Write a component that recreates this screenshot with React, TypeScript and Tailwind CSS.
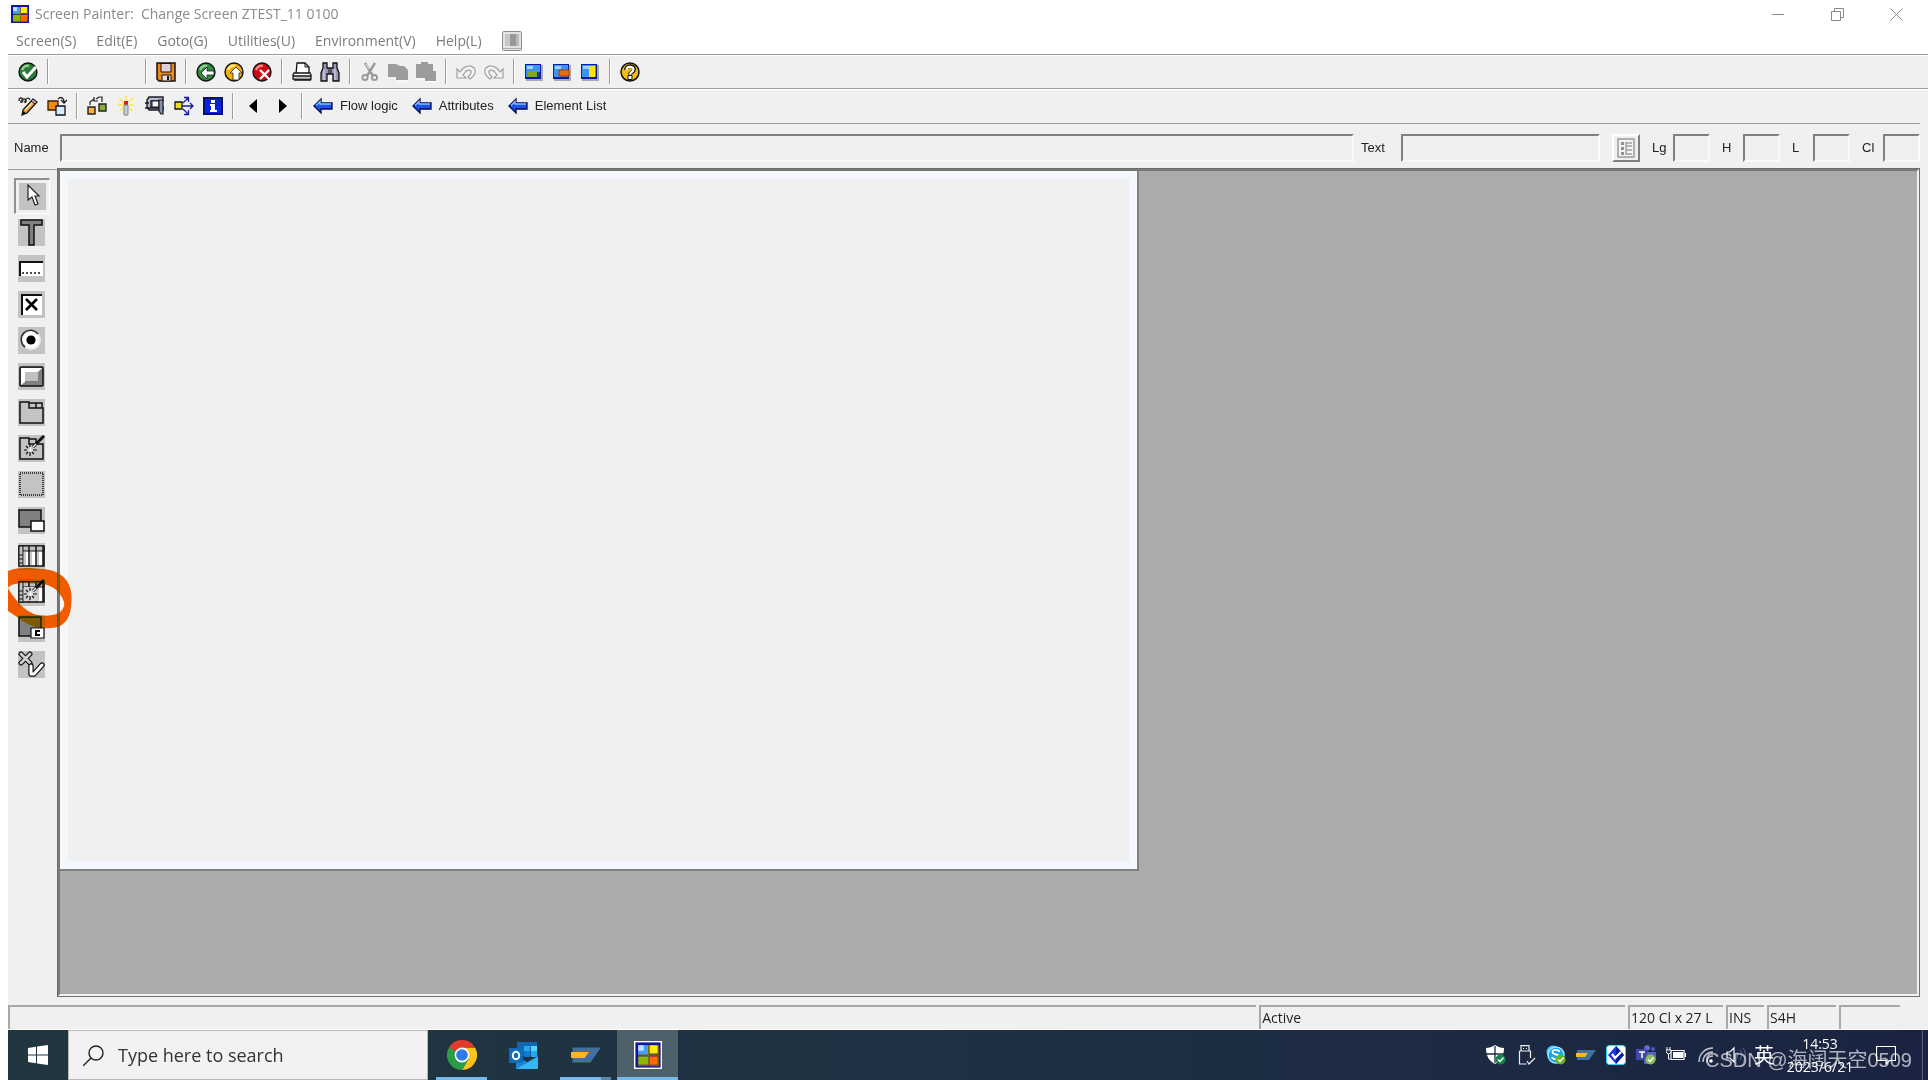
import type { ReactNode } from "react";

const uiFont = "font-['Open_Sans','Noto_Sans',sans-serif]";
const sapFont = "font-['Liberation_Sans',Arial,sans-serif]";

const Svg = ({ children, size = 20 }: { children: ReactNode; size?: number }) => (
  <svg width={size} height={size} viewBox="0 0 20 20" fill="none" aria-hidden="true" className="block shrink-0">
    {children}
  </svg>
);

const AppLogo = ({ size = 20 }: { size?: number }) => (
  <Svg size={size}>
    <path d="M0 0h20v20H0z" fill="#fff" />
    <path d="M1 1h18v18H1z" fill="#1414a0" />
    <path d="M3 3h7v7H3z" fill="#4aa0f8" />
    <path d="M3 3h4v4H3z" fill="#b9e0ff" />
    <path d="M11 3h6v6h-6z" fill="#fff000" />
    <path d="M3 11h7v6H3z" fill="#8cb800" />
    <path d="M11 11h6v6h-6z" fill="#ff6a00" />
    <path d="M17.500 3v14.500H3" stroke="#7a5c10" />
    <path d="M10.500 3v14M3 10h14" stroke="#7a6a20" />
  </Svg>
);

const SapLogo = ({ size = 20 }: { size?: number }) => (
  <Svg size={size}>
    <path d="M1 5h19l-7 10H1z" fill="#41729f" />
    <path d="M0 8h12l-3 4H0z" fill="#fdb525" />
  </Svg>
);

const Ball = ({ color, light, children }: { color: string; light: string; children: ReactNode }) => (
  <Svg>
    <circle cx="10" cy="10" r="9" fill={color} stroke="#111" strokeWidth="1.4" />
    <path d="M4 8c1-3 4-5 7-4" stroke={light} strokeWidth="2.4" />
    {children}
  </Svg>
);

const SaveIcon = () => (
  <Svg>
    <path d="M1 1h18v18H3l-2-2z" fill="#e88a1c" stroke="#1a1208" strokeWidth="1.5" />
    <path d="M5 1.5h10V10H5z" fill="#ddd0dd" stroke="#1a1208" />
    <path d="M6 13h9v6H6z" fill="#e8dce8" stroke="#1a1208" />
    <path d="M12 14v4" stroke="#1a1208" strokeWidth="2" />
  </Svg>
);

const PrintIcon = () => (
  <Svg>
    <path d="M5 1h8l4 4v7H4z" fill="#fff" stroke="#111" strokeWidth="1.3" />
    <path d="M13 1v4h4" stroke="#111" />
    <path d="M2 11h16l1 2v4H1v-4z" fill="#fff" stroke="#111" strokeWidth="1.3" />
    <path d="M1 14h18M2 18h17" stroke="#111" strokeWidth="1.500" />
    <path d="M2 16h16" stroke="#b0b0b0" strokeWidth="1.500" />
  </Svg>
);

const FindIcon = () => (
  <Svg>
    <path d="M3 1h4v5h6V1h4v5l2 5v8h-6v-7H7v7H1v-8l2-5z" fill="#9999b3" stroke="#111" strokeWidth="1.3" />
    <path d="M4 7v11M15 7v11" stroke="#dcdcf0" />
    <path d="M8 7h4v4H8z" fill="#55556e" />
  </Svg>
);

const CutIcon = () => (
  <Svg>
    <path d="M5 1l8 13M15 1L7 14" stroke="#9a9a9a" strokeWidth="2.4" />
    <circle cx="5" cy="15.500" r="2.600" stroke="#9a9a9a" strokeWidth="2" />
    <circle cx="14.500" cy="15.500" r="2.600" stroke="#9a9a9a" strokeWidth="2" />
    <path d="M6 2l3 5" stroke="#fff" strokeWidth=".8" />
  </Svg>
);

const CopyIcon = () => (
  <Svg>
    <path d="M0 2h8l4 2h4l4 4v10H8v-3H0z" fill="#9c9c9c" />
    <path d="M1 16.500h7M9 19h11" stroke="#fff" />
  </Svg>
);

const PasteIcon = () => (
  <Svg>
    <path d="M0 2h5V0h7v2h5v7h3v10H9v-3H0z" fill="#9c9c9c" />
    <path d="M0 17h9M10 19.500h9" stroke="#fff" />
  </Svg>
);

const UndoIcon = ({ flip = false }: { flip?: boolean }) => (
  <Svg>
    <g transform={flip ? "matrix(-1 0 0 1 20 0)" : undefined}>
      <path
        d="M1 7v9h9l-3-3c3-5 6-6 8-4 1 2-1 4-3 6l2 2c4-3 7-7 4-11-4-4-10-2-14 4z"
        fill="#f4f4f4"
        stroke="#a0a0a0"
        strokeWidth="1.2"
      />
    </g>
  </Svg>
);

const WindowIcon = ({ children }: { children: ReactNode }) => (
  <Svg>
    <path d="M2 3h17v16H2z" fill="#aaa" />
    <path d="M1 2h16v15H1z" fill="#0b1ea0" />
    <path d="M2 3h14v12H2z" fill="#3d94f6" />
    <path d="M3 4h6v3H3z" fill="#9fd0ff" />
    {children}
  </Svg>
);

const HelpIcon = () => (
  <Svg>
    <circle cx="10" cy="10" r="9" fill="#f5bd10" stroke="#111" strokeWidth="1.5" />
    <path d="M6 8c0-5 8-5 8-.5 0 3-4 2.500-4 5" stroke="#111" strokeWidth="4" />
    <path d="M8 13.500h4v4H8z" fill="#fff" stroke="#111" />
    <path d="M6.500 8c0-4 7-4 7-.5 0 2.500-3.500 2.500-3.500 5" stroke="#fff" strokeWidth="2.200" />
  </Svg>
);

const EditIcon = () => (
  <Svg>
    <path d="M1 5c0-4 4-4 4-1s-3 3-2 1 4-3 5-1-2 4-1 1 4-4 5-1" stroke="#222" strokeWidth="1.2" />
    <path d="M5 14L15 3l4 3L9 17l-5 2z" fill="#f2a23a" stroke="#111" strokeWidth="1.2" />
    <path d="M7 14l9-9" stroke="#fde0a0" strokeWidth="1.5" />
    <path d="M15 3l4 3-2 2-4-3z" fill="#c9a6b5" stroke="#111" />
    <path d="M5 15l3 2-4 2z" fill="#111" />
  </Svg>
);

const OtherObjectIcon = () => (
  <Svg>
    <path d="M1 5h10v9H1z" fill="#f08c10" stroke="#3a1c00" strokeWidth="1.3" />
    <path d="M9 10h9v9H9z" fill="#d8ecfa" stroke="#112" strokeWidth="1.3" />
    <path d="M11 3c3-3 6-1 6 3M14 4l3 3 3-3" stroke="#222" strokeWidth="1.3" />
  </Svg>
);

const CheckObjectIcon = () => (
  <Svg>
    <path d="M1 11h7v7H1z" fill="#ffb02e" stroke="#222" strokeWidth="1.4" />
    <path d="M12 8h7v7h-7z" fill="#8fae3c" stroke="#222" strokeWidth="1.4" />
    <path d="M3 9V6l4-3M9 3l3-2h3v5M7 1v4h4" stroke="#222" strokeWidth="1.2" />
  </Svg>
);

const ActivateIcon = () => (
  <Svg>
    <path d="M10 0v4M3 2l4 4M17 2l-4 4M2 9h5M18 9h-5M4 15l3-3M16 15l-3-3" stroke="#ffe838" strokeWidth="1.5" />
    <path d="M8 5h4v4H8z" fill="#e81414" />
    <path d="M8 9h4v10H8z" fill="#b8d0d4" stroke="#889" />
  </Svg>
);

const TestIcon = () => (
  <Svg>
    <path d="M4 1h14v4H6v6h12v3H4l-2-3V4z" fill="#b4bad0" stroke="#1a1a24" strokeWidth="1.4" />
    <path d="M7 5h7v6H7z" fill="#f4f4f4" stroke="#1a1a24" />
    <path d="M14 4h4v14h-2l-2-3z" fill="#8890a8" stroke="#1a1a24" strokeWidth="1.200" />
    <path d="M0 7h4M0 12h14" stroke="#1a1a24" strokeWidth="1.500" />
  </Svg>
);

const WhereUsedIcon = () => (
  <Svg>
    <path d="M8 10h11M16 7l3 3-3 3M9 7l5-5M10 1.500h4.500V6M9 13l5 5M10 18.500h4.500V14" stroke="#1a1aa0" strokeWidth="1.3" />
    <path d="M1 6h7v7H1z" fill="#e8e020" stroke="#111" strokeWidth="1.3" />
  </Svg>
);

const InfoIcon = () => (
  <Svg>
    <path d="M0 1h20v18H0z" fill="#06106e" />
    <path d="M2 3h16v14H2z" fill="#0a22e0" />
    <path d="M8 4h4v3H8zM7 8h5v6h2v2H7v-2h1v-4H7z" fill="#fff" />
  </Svg>
);

const BlueArrow = () => (
  <Svg>
    <path d="M1 10l7-7v4h11v6H8v4z" fill="#1c50f0" stroke="#04084a" strokeWidth="1.3" />
    <path d="M3 9.500l4-4V8h11" stroke="#7fc0ff" strokeWidth="1.400" />
  </Svg>
);

const Caret = ({ right = false }: { right?: boolean }) => (
  <Svg>
    <path d={right ? "M7 3l8 7-8 7z" : "M14 3l-8 7 8 7z"} fill="#000" />
  </Svg>
);

const Divider = () => <div className="mx-[9px] w-0.5 self-stretch border-l border-[#9c9c9c] bg-white" />;

type Item = { label: string; icon: ReactNode };

const IconButton = ({ label, icon }: Item) => (
  <button type="button" aria-label={label} className="flex shrink-0 items-center">
    {icon}
  </button>
);

const menus = ["Screen(S)", "Edit(E)", "Goto(G)", "Utilities(U)", "Environment(V)", "Help(L)"];

const standardGroups: Item[][] = [
  [{ label: "Save", icon: <SaveIcon /> }],
  [
    { label: "Back", icon: <Ball color="#2f8a3c" light="#8fd090"><path d="M5 11l6-6v4h7v4h-7v4z" fill="#fff" stroke="#123" strokeWidth=".8" /></Ball> },
    { label: "Exit", icon: <Ball color="#f0b000" light="#ffe880"><path d="M12 5l6 6h-3v7H9v-7H6z" fill="#fff" stroke="#321" strokeWidth=".8" /></Ball> },
    { label: "Cancel", icon: <Ball color="#cc0a14" light="#ff8a80"><path d="M8 8l9 9M17 8l-9 9" stroke="#fff" strokeWidth="2.400" /></Ball> },
  ],
  [
    { label: "Print", icon: <PrintIcon /> },
    { label: "Find", icon: <FindIcon /> },
  ],
  [
    { label: "Cut", icon: <CutIcon /> },
    { label: "Copy", icon: <CopyIcon /> },
    { label: "Paste", icon: <PasteIcon /> },
  ],
  [
    { label: "Undo", icon: <UndoIcon /> },
    { label: "Redo", icon: <UndoIcon flip /> },
  ],
  [
    { label: "New session", icon: <WindowIcon><path d="M4 9h9v6H4z" fill="#7fa814" /><path d="M13 10h3v5h-3z" fill="#123c90" /></WindowIcon> },
    { label: "Create shortcut", icon: <WindowIcon><path d="M7 8h10v6H7z" fill="#f06a10" stroke="#a03a00" /></WindowIcon> },
    { label: "Customize layout", icon: <WindowIcon><path d="M9 4h6v11H9z" fill="#ffe600" /></WindowIcon> },
  ],
  [{ label: "Help", icon: <HelpIcon /> }],
];

const objectGroups: Item[][] = [
  [
    { label: "Display or change", icon: <EditIcon /> },
    { label: "Other object", icon: <OtherObjectIcon /> },
  ],
  [
    { label: "Check", icon: <CheckObjectIcon /> },
    { label: "Activate", icon: <ActivateIcon /> },
    { label: "Test", icon: <TestIcon /> },
    { label: "Where used", icon: <WhereUsedIcon /> },
    { label: "Information", icon: <InfoIcon /> },
  ],
  [
    { label: "Previous", icon: <Caret /> },
    { label: "Next", icon: <Caret right /> },
  ],
];

const Wand = () => (
  <>
    <path d="M15 12L26 1" stroke="#111" strokeWidth="3" />
    <path d="M15 12l3-3" stroke="#fff" strokeWidth="1.200" />
    <path d="M12 9v3M12 17v4M6 15h3M15 15h4M8 11l2 2M16 19l-2-2M8 19l2-2" stroke="#111" strokeWidth="1.2" />
    <path d="M10 15h5M12.500 12v5" stroke="#fff" />
  </>
);

const TableShape = () => (
  <>
    <path d="M1 3h25v20H1z" fill="#fff" stroke="#111" strokeWidth="1.5" />
    <path d="M1 3h25v5H1z" fill="#c0c0c0" stroke="#111" />
    <path d="M1 3h4v20H1z" fill="#c0c0c0" stroke="#111" />
    <path d="M11 3v20M18 3v20M25 3v20" stroke="#111" strokeWidth="1.500" />
    <path d="M7 9v13M13 9v13M20 9v13" stroke="#b8b8b8" strokeWidth="1.500" />
    <path d="M1 12h4M1 16h4M1 20h4" stroke="#111" />
  </>
);

const tools: Item[] = [
  {
    label: "Select",
    icon: <path d="M9 2v15l4-3 3 8 3-1-3-8h4z" fill="#fff" stroke="#222" strokeWidth="1.200" />,
  },
  {
    label: "Text field",
    icon: <path d="M3 1h21v5h-8v20h-5V6H3z" fill="#808080" stroke="#111" strokeWidth="1.500" />,
  },
  {
    label: "Input field",
    icon: (
      <>
        <path d="M2 7h23v14H2z" fill="#fff" />
        <path d="M2 21V7h23" stroke="#111" strokeWidth="2" />
        <path d="M4 18h20" stroke="#111" strokeWidth="1.500" strokeDasharray="2 2" />
      </>
    ),
  },
  {
    label: "Checkbox",
    icon: (
      <>
        <path d="M4 4h20v20H4z" fill="#fff" />
        <path d="M4 24V4h20" stroke="#111" strokeWidth="2" />
        <path d="M8 8l11 11M19 8L8 19" stroke="#000" strokeWidth="2.600" />
      </>
    ),
  },
  {
    label: "Radio button",
    icon: (
      <>
        <circle cx="13" cy="13" r="9" fill="#fff" stroke="#eee" strokeWidth="2" />
        <path d="M7 20a9.300 9.300 0 1113-13" stroke="#333" strokeWidth="1.600" />
        <circle cx="13" cy="13" r="4.600" fill="#000" />
      </>
    ),
  },
  {
    label: "Pushbutton",
    icon: (
      <>
        <rect x="2" y="4" width="23" height="19" rx="1" fill="#808080" stroke="#111" strokeWidth="1.500" />
        <path d="M3 5h21l-4 4H7v10l-4 3z" fill="#fff" />
        <path d="M7 9h13v9H7z" fill="#c0c0c0" />
      </>
    ),
  },
  {
    label: "Tabstrip",
    icon: <path d="M2 24V3h9v6h14v15zM11 8V4h7v5M18 8V4h6v5" stroke="#111" strokeWidth="1.500" />,
  },
  {
    label: "Tabstrip wizard",
    icon: (
      <>
        <path d="M2 24V3h9v6h14v15zM11 8V4h7v5" stroke="#111" strokeWidth="1.500" />
        <Wand />
      </>
    ),
  },
  {
    label: "Box",
    icon: <path d="M2 2h23v22H2z" stroke="#111" strokeWidth="1.500" strokeDasharray="1 1" />,
  },
  {
    label: "Subscreen area",
    icon: (
      <>
        <path d="M1 3h22v17H1z" fill="#808080" stroke="#111" strokeWidth="1.500" />
        <path d="M13 14h13v10H13z" fill="#fff" stroke="#111" strokeWidth="1.500" />
      </>
    ),
  },
  { label: "Table control", icon: <TableShape /> },
  {
    label: "Table control wizard",
    icon: (
      <>
        <TableShape />
        <path d="M6 8h13v14H6z" fill="#d0d0d0" />
        <Wand />
      </>
    ),
  },
  {
    label: "Custom control",
    icon: (
      <>
        <path d="M1 2h22v19H1z" fill="#808080" stroke="#111" strokeWidth="1.500" />
        <path d="M13 13h13v10H13z" fill="#fff" stroke="#111" strokeWidth="1.200" />
        <path d="M22 16h-4v4h4" stroke="#000" strokeWidth="2" />
      </>
    ),
  },
  {
    label: "Status icon",
    icon: (
      <>
        <path d="M3 3l9 9M12 3l-9 9" stroke="#111" strokeWidth="5" strokeLinecap="round" />
        <path d="M3 3l9 9M12 3l-9 9" stroke="#d0d0d0" strokeWidth="2.800" strokeLinecap="round" />
        <path d="M13 15v8h3l8-9" stroke="#111" strokeWidth="5.400" strokeLinecap="round" strokeLinejoin="round" />
        <path d="M13 15v8h3l8-9" stroke="#fff" strokeWidth="3" strokeLinecap="round" strokeLinejoin="round" />
      </>
    ),
  },
];

const TitleBar = () => (
  <header className="flex h-[28px] items-center pl-[2px] text-[#8a8a8a]">
    <AppLogo />
    <h1 className="ml-[5px] flex-1 whitespace-pre text-sm">Screen Painter:  Change Screen ZTEST_11 0100</h1>
    <div className="flex items-center gap-[46px] pr-[25px]">
      <button type="button" aria-label="Minimize">
        <svg width="13" height="13" viewBox="0 0 13 13" className="block"><path d="M0 6.500h12" stroke="#888" /></svg>
      </button>
      <button type="button" aria-label="Restore">
        <svg width="13" height="13" viewBox="0 0 13 13" fill="none" className="block"><path d="M.5 3.500h9v9h-9zM3.500 3.500v-3h9v9h-3" stroke="#888" /></svg>
      </button>
      <button type="button" aria-label="Close">
        <svg width="13" height="13" viewBox="0 0 13 13" className="block"><path d="M.5.5l12 12M12.500.5l-12 12" stroke="#888" /></svg>
      </button>
    </div>
  </header>
);

const MenuBar = () => (
  <nav className="flex h-[26px] items-center gap-5 pl-2 text-sm text-[#7c7c7c]">
    {menus.map((menu) => (
      <button key={menu} type="button">{menu}</button>
    ))}
    <button type="button" aria-label="Toggle layout">
      <Svg>
        <rect x=".5" y=".5" width="19" height="19" rx="1" fill="#e2e2e2" stroke="#8c8c8c" />
        <path d="M3 3h5v12H3z" fill="#c8c8c8" />
        <path d="M8 3h6v12H8z" fill="#969696" />
        <path d="M14 3h3v12h-3z" fill="#b8b8b8" />
        <path d="M1 17.500h18" stroke="#aaa" />
      </Svg>
    </button>
  </nav>
);

const barStyle = "flex items-center border-t border-[#9c9c9c] pl-[10px] shadow-[inset_0_1px_0_#fff]";

const StandardToolbar = () => (
  <div className={`${barStyle} h-[34px] py-1`}>
    <IconButton
      label="Enter"
      icon={<Ball color="#2a7a3a" light="#8fd090"><path d="M5 10l4 5 9-10" stroke="#fff" strokeWidth="3" /></Ball>}
    />
    <Divider />
    <input aria-label="Command" className="-mx-[9px] w-24 bg-transparent outline-none" />
    {standardGroups.map((group, i) => (
      <div key={i} className="flex items-center self-stretch">
        <Divider />
        <div className="flex gap-2">
          {group.map((item) => <IconButton key={item.label} {...item} />)}
        </div>
      </div>
    ))}
  </div>
);

const ObjectToolbar = () => (
  <div className={`${barStyle} h-[35px] py-1`}>
    {objectGroups.map((group, i) => (
      <div key={i} className="flex items-center self-stretch">
        <div className="flex gap-[9px]">
          {group.map((item) => <IconButton key={item.label} {...item} />)}
        </div>
        <Divider />
      </div>
    ))}
    <div className={`flex gap-[14px] pl-px text-[13px] text-[#222] ${sapFont}`}>
      {["Flow logic", "Attributes", "Element List"].map((label) => (
        <button key={label} type="button" className="flex items-center gap-[7px]">
          <BlueArrow />
          {label}
        </button>
      ))}
    </div>
  </div>
);

const sunken = "h-[28px] border-2 border-t-[#808080] border-l-[#808080] border-r-[#fafafa] border-b-[#fafafa] bg-[#efefef] outline-none";

const FieldBar = () => (
  <div className={`flex h-[46px] items-center border-t border-[#9c9c9c] pt-[3px] text-[13px] text-[#222] ${sapFont}`}>
    <label htmlFor="name" className="w-[52px] pl-[6px]">Name</label>
    <input id="name" className={`${sunken} min-w-0 flex-1`} />
    <label htmlFor="text" className="w-[47px] pl-[7px]">Text</label>
    <input id="text" className={`${sunken} w-[199px]`} />
    <button
      type="button"
      aria-label="Field list"
      className="ml-3 flex size-7 items-center justify-center border-2 border-t-white border-r-[#808080] border-b-[#808080] border-l-white"
    >
      <Svg>
        <path d="M2 1h16v18H2z" fill="#f4f4f4" stroke="#9a9a9a" strokeWidth="1.500" />
        <path d="M5 4h3v3H5zM5 9h3v3H5zM5 14h3v3H5z" fill="#909090" />
        <path d="M10 5h6M10 8h6M10 12h6M10 16h6M10 4v13" stroke="#a0a0a0" strokeWidth="1.500" />
      </Svg>
    </button>
    {["Lg", "H", "L", "Cl"].map((label) => (
      <div key={label} className="ml-3 flex items-center">
        <label htmlFor={label} className="w-[21px]">{label}</label>
        <input id={label} className={`${sunken} w-[37px]`} />
      </div>
    ))}
  </div>
);

const ToolPalette = () => (
  <div className="relative w-[49px] shrink-0 border-t border-[#9c9c9c] pt-3">
    <div className="flex flex-col items-start gap-[9px] pl-[10px]">
      {tools.map(({ label, icon }, i) => (
        <button
          key={label}
          type="button"
          aria-label={label}
          className={i === 0 ? "-m-1 border-t-2 border-r border-b border-l-2 border-t-[#909090] border-r-white border-b-white border-l-[#909090] p-[3px]" : ""}
        >
          <svg width="27" height="27" viewBox="0 0 27 27" fill="none" className="block bg-[#c3c3c3]">{icon}</svg>
        </button>
      ))}
    </div>
    {/* marker ring around the table control wizard */}
    <svg
      width="64"
      height="62"
      viewBox="0 0 64 62"
      className="pointer-events-none absolute top-[398px] left-0 z-10 mix-blend-darken"
    >
      <path
        d="M0 3C10-1 22 0 32 1c14 0 22 5 27 12 5 8 5 16 4 26-1 12-8 21-20 21-12 1-22-2-31-9L0 43zM0 20l1 2c8 12 15 20 25 24 9 3 18 2 25-1 4-3 6-7 5-11C52 23 44 17 34 16c-10 0-19-2-27 0-4 1-6 2-7 4z"
        fill="#f55a00"
        fillRule="evenodd"
      />
    </svg>
  </div>
);

const Workspace = () => (
  <main className="flex min-h-[420px] flex-1">
    <ToolPalette />
    <div className="-mt-px flex flex-1 border border-[#6e6e6e]">
      <div className="grid flex-1 grid-cols-[581fr_419fr] grid-rows-[85fr_15fr] border-2 border-t-[#787878] border-r-[#f2f2f2] border-b-[#f2f2f2] border-l-[#787878] bg-[#ababab]">
        <section
          aria-label="Screen layout"
          className="border-r-2 border-b-2 border-[#808080] bg-[#f4f7fc] p-2"
        >
          <div className="h-full bg-[#f0f0f0]" />
        </section>
      </div>
    </div>
  </main>
);

const cell = "h-[24px] border-t-2 border-l-2 border-[#a8a8a8] pl-px leading-[21px]";

const StatusBar = () => (
  <footer className="mt-2 flex h-[25px] gap-[3px] border-b border-white pr-7 text-sm text-[#222]">
    <div className={`${cell} flex-[1249]`} />
    <div className={`${cell} flex-[364]`}>Active</div>
    <div className={`${cell} w-[95px] whitespace-nowrap`}>120 Cl x 27 L</div>
    <div className={`${cell} w-[38px]`}>INS</div>
    <div className={`${cell} w-[69px]`}>S4H</div>
    <div className={`${cell} w-[61px]`} />
  </footer>
);

const ChromeLogo = () => (
  <svg width="30" height="30" viewBox="0 0 30 30" aria-hidden="true">
    <path d="M15 7.500h13A15 15 0 0115 30l6.500-11z" fill="#fcc31e" />
    <path d="M2 7.500A15 15 0 0015 30l6.500-11z" fill="#2a9d47" />
    <path d="M2 7.500A15 15 0 0128 7.500H15l-7 9z" fill="#e33b2e" />
    <path d="M2 7.500l6.500 11.200L10 12z" fill="#2a9d47" />
    <circle cx="15" cy="15" r="7.400" fill="#fff" />
    <circle cx="15" cy="15" r="5.800" fill="#2f7ae8" />
  </svg>
);

const OutlookLogo = () => (
  <svg width="30" height="30" viewBox="0 0 30 30" fill="none" aria-hidden="true">
    <path d="M9 2h20v14H9z" fill="#1066b5" />
    <path d="M16 6h6v5h-6z" fill="#28a8ea" />
    <path d="M23 6h6v5h-6z" fill="#50d9ff" />
    <path d="M16 11h6v6h-6z" fill="#0f78d4" />
    <path d="M23 11h6v6h-6z" fill="#28a8ea" />
    <path d="M8 16l11 6 11-6v13H8z" fill="#1a86d8" />
    <path d="M8 29l22-12v12z" fill="#35b8f1" />
    <path d="M1 8h14v15H1z" fill="#0f6cbd" />
    <ellipse cx="8" cy="15.500" rx="3.200" ry="3.800" stroke="#fff" strokeWidth="2" />
  </svg>
);

const GreenBadge = ({ color = "#6bb31b" }: { color?: string }) => (
  <>
    <circle cx="14.500" cy="14.500" r="5" fill={color} />
    <path d="M12 14.500l2 2 3.500-4" stroke="#fff" strokeWidth="1.300" />
  </>
);

const trayIcons: Item[] = [
  {
    label: "Windows Security",
    icon: (
      <Svg>
        <path d="M9 0c3 2 6 3 9 3 0 8-3 13-9 16C3 16 0 11 0 3c3 0 6-1 9-3z" fill="#fff" />
        <path d="M9 1v17M0 9h18" stroke="#1c2a40" strokeWidth="1.300" />
        <GreenBadge color="#158548" />
      </Svg>
    ),
  },
  {
    label: "Safely remove hardware",
    icon: (
      <Svg>
        <path d="M5 6V.6h8V6M3.500 6h11v7M3.500 6v13h7M7 3.500h1M10 3.500h1M11 16l2 3 6-6" stroke="#eee" strokeWidth="1.200" />
      </Svg>
    ),
  },
  {
    label: "Skype",
    icon: (
      <Svg>
        <circle cx="7" cy="7" r="6.500" fill="#48c7ff" />
        <circle cx="10" cy="10" r="8" fill="#16a5e8" stroke="#9fe6ff" strokeWidth="1.500" />
        <path d="M13.500 7c-1-3-7-2.500-7 0 0 3.500 7 1.500 7 5 0 3-6.500 3-7.500 0" stroke="#fff" strokeWidth="1.800" />
        <GreenBadge />
      </Svg>
    ),
  },
  { label: "SAP Logon", icon: <SapLogo /> },
  {
    label: "Sync client",
    icon: (
      <Svg>
        <rect x=".5" y=".5" width="19" height="19" rx="3" fill="#fff" stroke="#30d8f0" />
        <path d="M10 1l8 9-8 9-8-9z" fill="#1838e8" />
        <path d="M10 1l8 9-8 9z" fill="#0a1c9c" />
        <path d="M6 9l3 4 6-6" stroke="#fff" strokeWidth="2.200" />
      </Svg>
    ),
  },
  {
    label: "Teams",
    icon: (
      <Svg>
        <circle cx="11" cy="3" r="2.800" fill="#6870d8" />
        <circle cx="17" cy="4" r="2" fill="#5058b8" />
        <path d="M8 7h12v8l-6 4H8z" fill="#5a62c3" />
        <path d="M0 4h11v11H0z" fill="#4048a8" />
        <path d="M3 7h6M6 7v6" stroke="#fff" strokeWidth="1.500" />
        <GreenBadge color="#8cbd58" />
      </Svg>
    ),
  },
  {
    label: "Battery",
    icon: (
      <Svg>
        <path d="M5 5.500h13v9H5zM19.500 8v4" stroke="#fff" strokeWidth="1.200" />
        <path d="M7 7h10v6H7z" fill="#fff" />
        <path d="M1 2v3M4 2v3M0 5h5v2L3 9H2L0 7zM2.500 9v5H5" stroke="#fff" fill="#1c2a40" />
      </Svg>
    ),
  },
  {
    label: "Network",
    icon: (
      <Svg>
        <path d="M3 17C3 9 9 3 17 3M7 17c0-6 4-10 10-10M11 17c0-3 2-6 6-6" stroke="#c8ccd4" strokeWidth="1.300" />
        <circle cx="15" cy="16" r="1.800" fill="#fff" />
      </Svg>
    ),
  },
  {
    label: "Volume",
    icon: (
      <Svg>
        <path d="M1 7h3l4-4v14l-4-4H1z" stroke="#fff" strokeWidth="1.200" />
        <path d="M11 7c1 2 1 4 0 6M14 5c2 3 2 7 0 10M17 3c3 4 3 10 0 14" stroke="#5c6880" />
      </Svg>
    ),
  },
];

const Taskbar = () => (
  <div className="relative flex h-[50px] items-stretch bg-linear-to-r from-[#22363f] via-[#1e3042] to-[#1a2442]">
    <button type="button" aria-label="Start" className="flex w-[60px] items-center justify-center">
      <svg width="20" height="20" viewBox="0 0 20 20">
        <path d="M0 3l8-1.200v7.700H0zM9 1.600L20 0v9.500H9zM0 10.500h8v7.700L0 17zM9 10.500h11V20L9 18.400z" fill="#fff" />
      </svg>
    </button>
    <label className="flex w-[360px] items-center border border-[#b8b8b8] bg-[#f2f2f2] pl-[14px]">
      <svg width="21" height="21" viewBox="0 0 21 21" fill="none" aria-hidden="true">
        <circle cx="13" cy="8" r="7" stroke="#222" strokeWidth="1.400" />
        <path d="M8 13l-8 8" stroke="#222" strokeWidth="1.400" />
      </svg>
      <input
        aria-label="Search"
        placeholder="Type here to search"
        className="ml-[14px] min-w-0 flex-1 bg-transparent text-lg outline-none placeholder:text-[#333]"
      />
    </label>
    <div className="flex items-stretch pl-2">
      <button type="button" aria-label="Chrome" className="flex w-[51px] items-center justify-center border-b-3 border-[#76b9ed] pt-[3px]">
        <ChromeLogo />
      </button>
      <button type="button" aria-label="Outlook" className="ml-[10px] flex w-[51px] items-center justify-center">
        <OutlookLogo />
      </button>
      <button type="button" aria-label="SAP Logon" className="relative ml-3 flex w-[51px] items-center justify-center border-b-3 border-[#76b9ed] pt-[3px]">
        <SapLogo size={30} />
        <span className="absolute right-0 -bottom-[3px] h-[3px] w-[10px] bg-[#5a86a8]" />
      </button>
      <button type="button" aria-label="Screen Painter" className="ml-[6px] flex w-[61px] items-center justify-center border-b-3 border-[#76b9ed] bg-[#4e6069] pt-[3px]">
        <AppLogo size={28} />
      </button>
    </div>
    <div className="ml-auto flex items-center text-white">
      <div className="flex gap-[10px]">
        {trayIcons.map((item) => <IconButton key={item.label} {...item} />)}
      </div>
      <button type="button" className="ml-2 font-['Noto_Sans_CJK_SC',sans-serif] text-xl">英</button>
      <div className="ml-2 flex w-[76px] flex-col items-center text-sm leading-[23px]">
        <time>14:53</time>
        <span>2023/6/21</span>
      </div>
      <button type="button" aria-label="Notifications" className="ml-[18px]">
        <Svg>
          <path d="M.5 1.500h19v14h-6L10 19v-3.500H.5z" stroke="#fff" strokeWidth="1.200" />
        </Svg>
      </button>
      <div className="ml-[26px] h-full w-[6px] border-l border-[#5a6478]" />
    </div>
    <span className="pointer-events-none absolute right-4 bottom-1 font-['Liberation_Sans','Noto_Sans_CJK_SC',sans-serif] text-[20px] leading-8 whitespace-nowrap text-white/65">
      CSDN @海阔天空0509
    </span>
  </div>
);

const App = () => {
  return (
    <div className={`flex min-h-screen flex-col bg-white pl-2 ${uiFont}`}>
      <TitleBar />
      <MenuBar />
      <div className="flex flex-1 flex-col bg-[#f0f0f0]">
        <StandardToolbar />
        <ObjectToolbar />
        <div className="flex flex-1 flex-col pr-2">
          <FieldBar />
          <Workspace />
        </div>
        <StatusBar />
      </div>
      <Taskbar />
    </div>
  );
};

export default App;
